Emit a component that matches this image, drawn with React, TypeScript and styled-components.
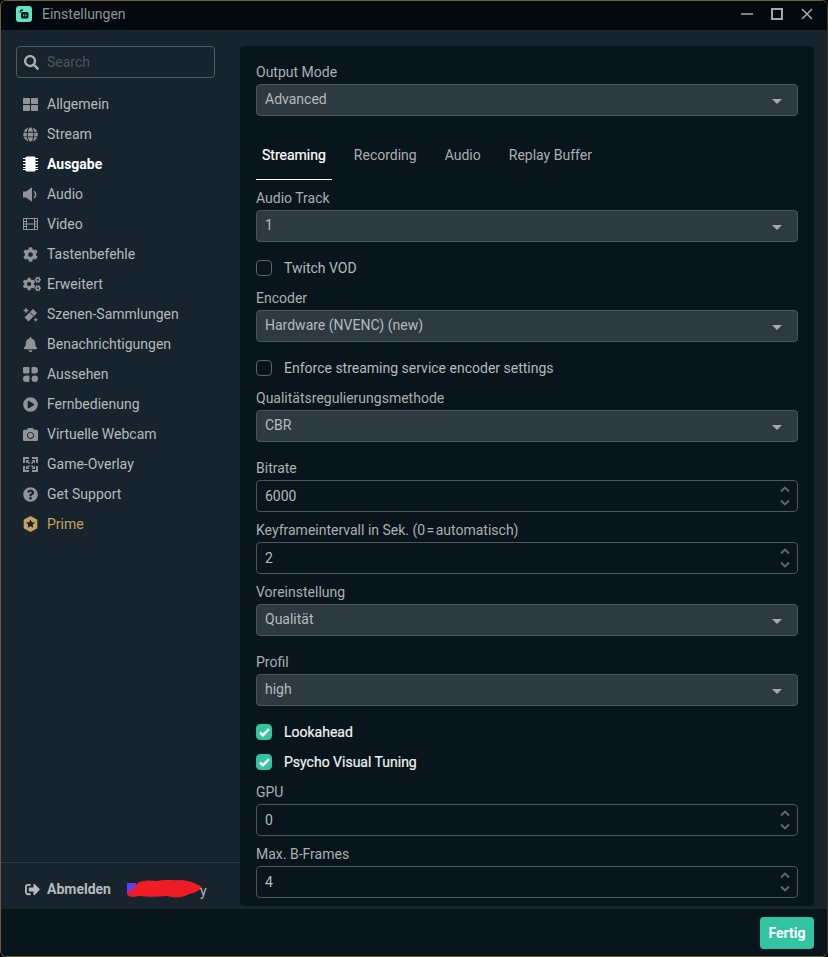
import React from "react";
import styled, { createGlobalStyle } from "styled-components";
import {
  FaBell,
  FaCamera,
  FaCog,
  FaCogs,
  FaGlobe,
  FaPlayCircle,
  FaQuestionCircle,
  FaSearch,
  FaSignOutAlt,
  FaThLarge,
} from "react-icons/fa";

const GlobalStyle = createGlobalStyle`
  html, body {
    margin: 0;
    padding: 0;
    height: 100%;
    background: #000;
    overflow: hidden;
  }
  * {
    box-sizing: border-box;
  }
`;

const Frame = styled.div`
  width: 828px;
  height: 957px;
  display: flex;
  flex-direction: column;
  overflow: hidden;
  border-radius: 6px;
  border: 1px solid #6e5c34;
  border-right-color: #3c3524;
  background: #09151c;
  font-family: Roboto, "Liberation Sans", sans-serif;
  font-size: 14px;
  color: #b4babd;
`;

const TitleBar = styled.div`
  height: 29px;
  flex: none;
  display: flex;
  align-items: center;
  padding: 0 14px 3px 15px;
  background: #03090e;
`;

const Title = styled.span`
  margin-left: 10px;
  flex: 1;
  font-size: 14px;
  color: #8f9599;
`;

const WindowButtons = styled.div`
  display: flex;
  align-items: center;
  gap: 18px;
  margin-top: -1px;
  color: #a3a8ab;
`;

const Body = styled.div`
  flex: 1;
  min-height: 0;
  display: flex;
  background: #17242d;
`;

const Sidebar = styled.aside`
  width: 239px;
  flex: none;
  display: flex;
  flex-direction: column;
`;

const SearchBox = styled.div`
  height: 32px;
  margin: 16px 25px 11px 15px;
  display: flex;
  align-items: center;
  gap: 8px;
  padding: 0 7px;
  border: 1px solid #4f5b62;
  border-radius: 4px;
  color: #a8aeb1;
  font-size: 15px;
`;

const SearchHint = styled.span`
  font-size: 14px;
  color: #4a565e;
`;

const NavList = styled.nav`
  flex: 1;
  display: flex;
  flex-direction: column;
`;

const NavItem = styled.div<{ $active?: boolean; $prime?: boolean }>`
  height: 30px;
  display: flex;
  align-items: center;
  padding-left: 22px;
  font-weight: ${(p) => (p.$active ? 700 : 400)};
  color: ${(p) => (p.$prime ? "#c9a05c" : p.$active ? "#ffffff" : "#b4babd")};
`;

const NavIcon = styled.span<{ $active?: boolean; $prime?: boolean }>`
  width: 24px;
  flex: none;
  display: flex;
  align-items: center;
  color: ${(p) => (p.$prime ? "#c9a05c" : p.$active ? "#ffffff" : "#8e9497")};
  font-size: 15px;
`;

const AccountRow = styled.div`
  height: 47px;
  flex: none;
  display: flex;
  align-items: center;
  padding: 6px 0 0 24px;
  border-top: 1px solid #2f3a42;
`;

const LogoutLabel = styled.span`
  margin-left: 7px;
  font-weight: 700;
  color: #b4babd;
`;

const Redacted = styled.span`
  margin-left: 16px;
  display: flex;
  align-items: flex-end;
  color: #b4babd;
`;

const TrailingLetter = styled.span`
  margin-left: -3px;
`;

const Panel = styled.main`
  flex: 1;
  height: 860px;
  margin: 16px 13px 0 0;
  padding: 14px 16px 0;
  overflow: hidden;
  border-radius: 4px;
  background: #09151c;
`;

const Label = styled.div`
  height: 24px;
  line-height: 24px;
  color: #a9afb2;
`;

const SelectBox = styled.div`
  height: 32px;
  margin-bottom: 14px;
  display: flex;
  align-items: center;
  justify-content: space-between;
  padding: 0 15px 2px 8px;
  border: 1px solid #4a565d;
  border-radius: 4px;
  background: #2e3a42;
  color: #b4babd;
`;

const Caret = styled.span`
  width: 0;
  height: 0;
  margin-top: 4px;
  border-left: 5px solid transparent;
  border-right: 5px solid transparent;
  border-top: 5px solid #a6abae;
`;

const NumberBox = styled.div`
  height: 32px;
  margin-bottom: 6px;
  display: flex;
  align-items: center;
  justify-content: space-between;
  padding: 0 7px 0 8px;
  border: 1px solid #4a565d;
  border-radius: 4px;
  color: #b4babd;
`;

const Tabs = styled.div`
  height: 50px;
  margin-bottom: 6px;
  display: flex;
  gap: 16px;
`;

const Tab = styled.div<{ $active?: boolean }>`
  height: 50px;
  padding: 0 6px;
  line-height: 50px;
  color: ${(p) => (p.$active ? "#ffffff" : "#a9afb2")};
  border-bottom: ${(p) => (p.$active ? "1px solid #ffffff" : "none")};
  ${(p) => (p.$active ? "-webkit-text-stroke: 0.2px #ffffff;" : "")}
`;

const CheckRow = styled.div<{ $checked?: boolean }>`
  height: 24px;
  margin-bottom: 6px;
  display: flex;
  align-items: center;
  gap: 12px;
  color: ${(p) => (p.$checked ? "#f0f2f2" : "#b4babd")};
  ${(p) => (p.$checked ? "-webkit-text-stroke: 0.2px #f0f2f2;" : "")}
`;

const CheckBox = styled.span<{ $checked?: boolean }>`
  width: 16px;
  height: 16px;
  flex: none;
  display: flex;
  align-items: center;
  justify-content: center;
  border-radius: 4px;
  border: 1px solid ${(p) => (p.$checked ? "#31c3a2" : "#5b666c")};
  background: ${(p) => (p.$checked ? "#31c3a2" : "transparent")};
`;

const Footer = styled.footer`
  height: 47px;
  flex: none;
  display: flex;
  align-items: center;
  justify-content: flex-end;
  padding: 1px 13px 0 0;
  background: #09151c;
`;

const DoneButton = styled.div`
  width: 54px;
  height: 32px;
  display: flex;
  align-items: center;
  justify-content: center;
  border-radius: 4px;
  background: #31c3a2;
  color: #ffffff;
  font-weight: 700;
`;

const Logo = () => (
  <svg width="16" height="16" viewBox="0 0 16 16">
    <rect width="16" height="16" rx="3" fill="#62e3bd" />
    <path d="M4 6.5 A3 3 0 0 1 7 4" fill="none" stroke="#09151c" strokeWidth="1.3" />
    <rect x="5" y="6" width="7.5" height="6.5" rx="1.6" fill="#09151c" />
    <rect x="7.2" y="8.3" width="1" height="2" fill="#62e3bd" />
    <rect x="9.4" y="8.3" width="1" height="2" fill="#62e3bd" />
  </svg>
);

const ChipIcon = () => (
  <svg width="15" height="16" viewBox="0 0 15 16" fill="currentColor">
    <rect x="2.5" y="0.5" width="10" height="15" rx="1.5" />
    <path d="M0 2.5H15M0 5.5H15M0 8.5H15M0 11.5H15M0 13.5H15" stroke="currentColor" strokeWidth="1" />
  </svg>
);

const SpeakerIcon = () => (
  <svg width="15" height="15" viewBox="0 0 15 15" fill="currentColor">
    <path d="M0 4.5h3L9 0.3V14.7L3 10.5H0z" />
    <path d="M11 4.2a4.2 4.2 0 0 1 0 6.6" fill="none" stroke="currentColor" strokeWidth="1.5" />
  </svg>
);

const FilmIcon = () => (
  <svg width="15" height="12" viewBox="0 0 15 12" fill="none" stroke="currentColor">
    <rect x="0.5" y="0.5" width="14" height="11" />
    <path d="M3.5 0.5V11.5M11.5 0.5V11.5M0.5 3.5H3.5M0.5 6H3.5M0.5 8.5H3.5M11.5 3.5H14.5M11.5 6H14.5M11.5 8.5H14.5M3.5 6H11.5" />
  </svg>
);

const WandIcon = () => (
  <svg width="15" height="15" viewBox="0 0 15 15" fill="currentColor">
    <path d="M1.5 10.5 10 2 14 6 5.5 14.5z" />
    <path d="M7.2 5.6 10.4 8.8" stroke="#17242d" strokeWidth="1" />
    <path d="M3 0.5 4 2.5 6 3.5 4 4.5 3 6.5 2 4.5 0 3.5 2 2.5z" />
    <path d="M12.8 10.5 13.5 12 15 12.7 13.5 13.4 12.8 15 12 13.4 10.5 12.7 12 12z" />
  </svg>
);

const PiecesIcon = () => (
  <svg width="15" height="15" viewBox="0 0 14 14" fill="currentColor">
    <rect x="0" y="0" width="6" height="6" rx="1" />
    <path d="M8 1a1 1 0 0 1 1-1h2a3 3 0 0 1 0 6H9a1 1 0 0 1-1-1z" />
    <path d="M0 11a3 3 0 0 1 3-3h2a1 1 0 0 1 1 1v4a1 1 0 0 1-1 1H3a3 3 0 0 1-3-3z" />
    <circle cx="11" cy="11" r="3" />
  </svg>
);

const OverlayIcon = () => (
  <svg width="15" height="15" viewBox="0 0 15 15" fill="currentColor">
    <path d="M0 0h6v2H2v4H0zM9 0h6v6h-2V2H9zM0 9h2v4h4v2H0zM13 9h2v6H9v-2h4z" />
    <path d="M3 3h3.4L3 6.4zM12 3v3.4L8.6 3zM3 12V8.6L6.4 12zM12 12H8.6L12 8.6z" />
    <path d="M4.5 4.5 6.5 6.5M10.5 4.5 8.5 6.5M4.5 10.5 6.5 8.5M10.5 10.5 8.5 8.5" stroke="currentColor" strokeWidth="1.5" />
  </svg>
);

const PrimeIcon = () => (
  <svg width="15" height="16" viewBox="0 0 15 16">
    <path
      d="M7.5 1 13.5 4.2V11.8L7.5 15 1.5 11.8V4.2z"
      fill="currentColor"
      stroke="currentColor"
      strokeWidth="1.6"
      strokeLinejoin="round"
    />
    <path
      d="M7.5 3.4 8.9 6.2 12 6.6 9.7 8.7 10.3 11.8 7.5 10.3 4.7 11.8 5.3 8.7 3 6.6 6.1 6.2z"
      fill="#17242d"
    />
  </svg>
);

const Stepper = () => (
  <svg width="10" height="20" viewBox="0 0 10 20" fill="none" stroke="#5f686d" strokeWidth="1.8">
    <path d="M1 5.5 5 1.5 9 5.5" />
    <path d="M1 14.5 5 18.5 9 14.5" />
  </svg>
);

const Tick = () => (
  <svg width="11" height="9" viewBox="0 0 11 9" fill="none" stroke="#ffffff" strokeWidth="2.5">
    <path d="M1 4.5 4 7.2 10 1.2" />
  </svg>
);

const RedScribble = () => (
  <svg width="76" height="20" viewBox="0 0 76 20">
    <rect x="0" y="4" width="9" height="11" rx="1" fill="#6a3cf0" />
    <path
      d="M0 15 C3 11 7 11 9 6 C13 1 22 1 30 2 C38 0 47 2 54 1 C62 1 70 5 75 8 C72 13 65 14 60 16 C55 19 46 19 40 17 C30 18 20 18 12 17 C8 18 2 19 0 15 Z"
      fill="#ee1c25"
    />
  </svg>
);

const navItems: { label: string; icon: React.ReactNode; active?: boolean; prime?: boolean }[] = [
  { label: "Allgemein", icon: <FaThLarge size={15} /> },
  { label: "Stream", icon: <FaGlobe size={15} /> },
  { label: "Ausgabe", icon: <ChipIcon />, active: true },
  { label: "Audio", icon: <SpeakerIcon /> },
  { label: "Video", icon: <FilmIcon /> },
  { label: "Tastenbefehle", icon: <FaCog size={15} /> },
  { label: "Erweitert", icon: <FaCogs size={18} /> },
  { label: "Szenen-Sammlungen", icon: <WandIcon /> },
  { label: "Benachrichtigungen", icon: <FaBell size={15} /> },
  { label: "Aussehen", icon: <PiecesIcon /> },
  { label: "Fernbedienung", icon: <FaPlayCircle size={15} /> },
  { label: "Virtuelle Webcam", icon: <FaCamera size={15} /> },
  { label: "Game-Overlay", icon: <OverlayIcon /> },
  { label: "Get Support", icon: <FaQuestionCircle size={15} /> },
  { label: "Prime", icon: <PrimeIcon />, prime: true },
];

const SelectField = ({ label, value }: { label: string; value: string }) => (
  <>
    <Label>{label}</Label>
    <SelectBox>
      {value}
      <Caret />
    </SelectBox>
  </>
);

const NumberField = ({ label, value }: { label: string; value: string }) => (
  <>
    <Label>{label}</Label>
    <NumberBox>
      {value}
      <Stepper />
    </NumberBox>
  </>
);

const CheckField = ({ label, checked }: { label: string; checked?: boolean }) => (
  <CheckRow $checked={checked}>
    <CheckBox $checked={checked}>{checked && <Tick />}</CheckBox>
    {label}
  </CheckRow>
);

const App = () => {
  return (
    <>
      <GlobalStyle />
      <Frame>
        <TitleBar>
          <Logo />
          <Title>Einstellungen</Title>
          <WindowButtons>
            <svg width="12" height="12" viewBox="0 0 12 12" stroke="currentColor" strokeWidth="1.5">
              <path d="M0 6H12" />
            </svg>
            <svg width="12" height="12" viewBox="0 0 12 12" fill="none" stroke="currentColor" strokeWidth="2">
              <rect x="1" y="1" width="10" height="10" />
            </svg>
            <svg width="12" height="12" viewBox="0 0 12 12" stroke="currentColor" strokeWidth="1.6">
              <path d="M1 1 11 11M11 1 1 11" />
            </svg>
          </WindowButtons>
        </TitleBar>
        <Body>
          <Sidebar>
            <SearchBox>
              <FaSearch size={15} />
              <SearchHint>Search</SearchHint>
            </SearchBox>
            <NavList>
              {navItems.map((item) => (
                <NavItem key={item.label} $active={item.active} $prime={item.prime}>
                  <NavIcon $active={item.active} $prime={item.prime}>
                    {item.icon}
                  </NavIcon>
                  {item.label}
                </NavItem>
              ))}
            </NavList>
            <AccountRow>
              <FaSignOutAlt size={15} />
              <LogoutLabel>Abmelden</LogoutLabel>
              <Redacted>
                <RedScribble />
                <TrailingLetter>y</TrailingLetter>
              </Redacted>
            </AccountRow>
          </Sidebar>
          <Panel>
            <SelectField label="Output Mode" value="Advanced" />
            <Tabs>
              <Tab $active>Streaming</Tab>
              <Tab>Recording</Tab>
              <Tab>Audio</Tab>
              <Tab>Replay Buffer</Tab>
            </Tabs>
            <SelectField label="Audio Track" value="1" />
            <CheckField label="Twitch VOD" />
            <SelectField label="Encoder" value="Hardware (NVENC) (new)" />
            <CheckField label="Enforce streaming service encoder settings" />
            <SelectField label="Qualitätsregulierungsmethode" value="CBR" />
            <NumberField label="Bitrate" value="6000" />
            <NumberField label="Keyframeintervall in Sek. (0&#8202;=&#8202;automatisch)" value="2" />
            <SelectField label="Voreinstellung" value="Qualität" />
            <SelectField label="Profil" value="high" />
            <CheckField label="Lookahead" checked />
            <CheckField label="Psycho Visual Tuning" checked />
            <NumberField label="GPU" value="0" />
            <NumberField label="Max. B-Frames" value="4" />
          </Panel>
        </Body>
        <Footer>
          <DoneButton>Fertig</DoneButton>
        </Footer>
      </Frame>
    </>
  );
};

export default App;
